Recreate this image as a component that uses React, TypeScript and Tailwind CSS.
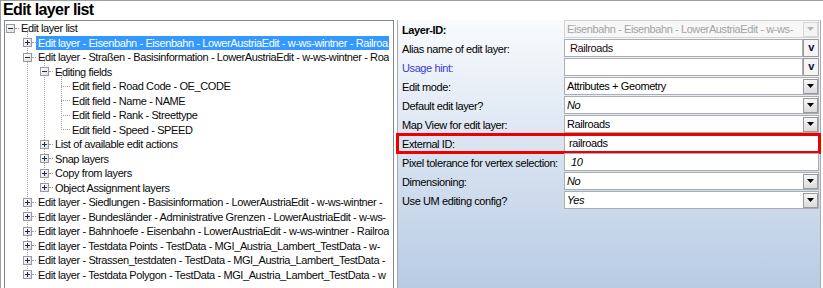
import React from "react";

type Row = { l: number; t: string; exp?: "+" | "-"; sel?: boolean };

const rows: Row[] = [
  { l: 0, t: "Edit layer list", exp: "-" },
  { l: 1, t: "Edit layer - Eisenbahn - Eisenbahn - LowerAustriaEdit - w-ws-wintner - Railroa", exp: "+", sel: true },
  { l: 1, t: "Edit layer - Straßen - Basisinformation - LowerAustriaEdit - w-ws-wintner - Roa", exp: "-" },
  { l: 2, t: "Editing fields", exp: "-" },
  { l: 3, t: "Edit field - Road Code - OE_CODE" },
  { l: 3, t: "Edit field - Name - NAME" },
  { l: 3, t: "Edit field - Rank - Streettype" },
  { l: 3, t: "Edit field - Speed - SPEED" },
  { l: 2, t: "List of available edit actions", exp: "+" },
  { l: 2, t: "Snap layers", exp: "+" },
  { l: 2, t: "Copy from layers", exp: "+" },
  { l: 2, t: "Object Assignment layers", exp: "+" },
  { l: 1, t: "Edit layer - Siedlungen - Basisinformation - LowerAustriaEdit - w-ws-wintner -", exp: "+" },
  { l: 1, t: "Edit layer - Bundesländer - Administrative Grenzen - LowerAustriaEdit - w-ws-", exp: "+" },
  { l: 1, t: "Edit layer - Bahnhoefe - Eisenbahn - LowerAustriaEdit - w-ws-wintner - Railroa", exp: "+" },
  { l: 1, t: "Edit layer - Testdata Points - TestData - MGI_Austria_Lambert_TestData - w-", exp: "+" },
  { l: 1, t: "Edit layer - Strassen_testdaten - TestData - MGI_Austria_Lambert_TestData -", exp: "+" },
  { l: 1, t: "Edit layer - Testdata Polygon - TestData - MGI_Austria_Lambert_TestData - w", exp: "+" },
];

const boxSpacer = ["w-[1px]", "w-[18px]", "w-[35px]", "w-[52px]"];
const leafSpacer = ["w-[5px]", "w-[22px]", "w-[39px]", "w-[56px]"];

function ExpBox({ sign }: { sign: "+" | "-" }) {
  return (
    <div className="relative w-[9px] h-[9px] shrink-0 border border-[#9a9a9a] bg-gradient-to-br from-white to-[#dedede]">
      <div className="absolute left-[1px] top-[3px] w-[5px] h-[1px] bg-[#1c2a5a]" />
      {sign === "+" && <div className="absolute left-[3px] top-[1px] w-[1px] h-[5px] bg-[#1c2a5a]" />}
    </div>
  );
}

function TreeRow({ r }: { r: Row }) {
  return (
    <div className="flex items-center h-[14.5px] whitespace-nowrap">
      {r.exp ? (
        <>
          <div className={boxSpacer[r.l] + " shrink-0"} />
          <ExpBox sign={r.exp} />
          <div className="w-[4px] shrink-0 border-t border-dotted border-[#a0a0a0]" />
        </>
      ) : (
        <>
          <div className={leafSpacer[r.l] + " shrink-0"} />
          <div className="w-[9px] shrink-0 border-t border-dotted border-[#a0a0a0]" />
        </>
      )}
      <span
        className={
          "px-[2px] h-[14px] leading-[14px] " +
          (r.sel ? "bg-[#3399ff] text-white" : "text-[#0a0a0a]")
        }
      >
        {r.t}
      </span>
    </div>
  );
}

function Tri({ disabled }: { disabled?: boolean }) {
  return (
    <svg width="7" height="4" viewBox="0 0 7 4">
      <polygon points="0,0 7,0 3.5,4" fill={disabled ? "#b5b5b5" : "#000"} />
    </svg>
  );
}

function Combo({ text, italic, disabled }: { text: string; italic?: boolean; disabled?: boolean }) {
  return (
    <div
      className={
        "w-[255px] h-[18px] border flex items-center " +
        (disabled ? "border-[#cfd3d8] bg-[#f7f7f7]" : "border-[#abadb3] bg-white")
      }
    >
      <span
        className={
          "flex-1 pl-[2px] whitespace-nowrap overflow-hidden " +
          (italic ? "italic " : "") +
          (disabled ? "text-[#a3a3a3]" : "text-black")
        }
      >
        {text}
      </span>
      <div
        className={
          "w-[15px] h-[15px] flex items-center justify-center border " +
          (disabled
            ? "border-[#d8d8d8] bg-[#f4f4f4]"
            : "border-[#9a9a9a] bg-gradient-to-b from-[#f6f6f6] to-[#dcdcdc]")
        }
      >
        <Tri disabled={disabled} />
      </div>
    </div>
  );
}

function TextWithButton({ text }: { text: string }) {
  return (
    <div className="w-[255px] h-[18px] flex">
      <div className="w-[239px] h-[18px] border border-[#abadb3] bg-white flex items-center pl-[5px] text-[#1a0a10]">
        {text}
      </div>
      <div className="w-[16px] h-[18px] border border-[#9a9a9a] bg-[#f4f4f4] flex items-center justify-center font-bold text-[11px] text-[#0c0c40] leading-none pb-[1px]">
        v
      </div>
    </div>
  );
}

function TextBox({ text, italic }: { text: string; italic?: boolean }) {
  return (
    <div
      className={
        "w-[255px] h-[18px] border border-[#abadb3] bg-white flex items-center text-black " +
        (italic ? "italic pl-[6px]" : "pl-[4px]")
      }
    >
      {text}
    </div>
  );
}

function PropRow({
  label,
  children,
  labelClass,
  highlight,
}: {
  label: string;
  children: React.ReactNode;
  labelClass?: string;
  highlight?: boolean;
}) {
  return (
    <div className="relative flex h-[19px]">
      <div className={"w-[166px] pl-[4px] pt-[3px] h-[18px] flex items-center whitespace-nowrap " + (labelClass ?? "text-black")}>
        {label}
      </div>
      <div className="h-[18px]">{children}</div>
      {highlight && (
        <div className="absolute left-[-2px] top-[-1px] w-[425px] h-[21px] border-[3px] border-[#ee0000] pointer-events-none" />
      )}
    </div>
  );
}

export default function App() {
  const rowH = 14.5;
  const cy = (i: number) => rowH * i + 7.25;
  return (
    <div className="w-[823px] h-[288px] overflow-hidden bg-white border-t border-l border-[#a0a0a0] font-['Liberation_Sans',Arial,sans-serif] text-[11px] tracking-[-0.4px]">
      <div className="h-[19px] pl-[2px] leading-[17px] text-[16px] font-bold tracking-[-0.6px] text-black">
        Edit layer list
      </div>
      <div className="flex">
        <div className="ml-[3px] w-[390px] h-[300px] border border-[#828790] bg-white overflow-hidden">
          <div className="relative w-[384px] overflow-hidden">
            <div
              className="absolute left-[22px] w-0 border-l border-dotted border-[#a0a0a0]"
              style={{ top: cy(0), height: cy(17) - cy(0) }}
            />
            <div
              className="absolute left-[39px] w-0 border-l border-dotted border-[#a0a0a0]"
              style={{ top: cy(2), height: cy(11) - cy(2) }}
            />
            <div
              className="absolute left-[56px] w-0 border-l border-dotted border-[#a0a0a0]"
              style={{ top: cy(3), height: cy(7) - cy(3) }}
            />
            <div className="relative">
              {rows.map((r, i) => (
                <TreeRow key={i} r={r} />
              ))}
            </div>
          </div>
        </div>
        <div className="ml-[3px] w-[424px] h-[268px] border-l border-r border-[#a5acb5] bg-gradient-to-b from-[#f9fbfd] to-[#b8cbe4]">
          <PropRow label="Layer-ID:" labelClass="font-bold text-black">
            <Combo text="Eisenbahn - Eisenbahn - LowerAustriaEdit - w-ws-" disabled />
          </PropRow>
          <PropRow label="Alias name of edit layer:">
            <TextWithButton text="Railroads" />
          </PropRow>
          <PropRow label="Usage hint:" labelClass="text-[#3b3bd6]">
            <TextWithButton text="" />
          </PropRow>
          <PropRow label="Edit mode:">
            <Combo text="Attributes + Geometry" />
          </PropRow>
          <PropRow label="Default edit layer?">
            <Combo text="No" italic />
          </PropRow>
          <PropRow label="Map View for edit layer:">
            <Combo text="Railroads" />
          </PropRow>
          <PropRow label="External ID:" highlight>
            <TextBox text="railroads" />
          </PropRow>
          <PropRow label="Pixel tolerance for vertex selection:">
            <TextBox text="10" italic />
          </PropRow>
          <PropRow label="Dimensioning:">
            <Combo text="No" italic />
          </PropRow>
          <PropRow label="Use UM editing config?">
            <Combo text="Yes" italic />
          </PropRow>
        </div>
      </div>
    </div>
  );
}
